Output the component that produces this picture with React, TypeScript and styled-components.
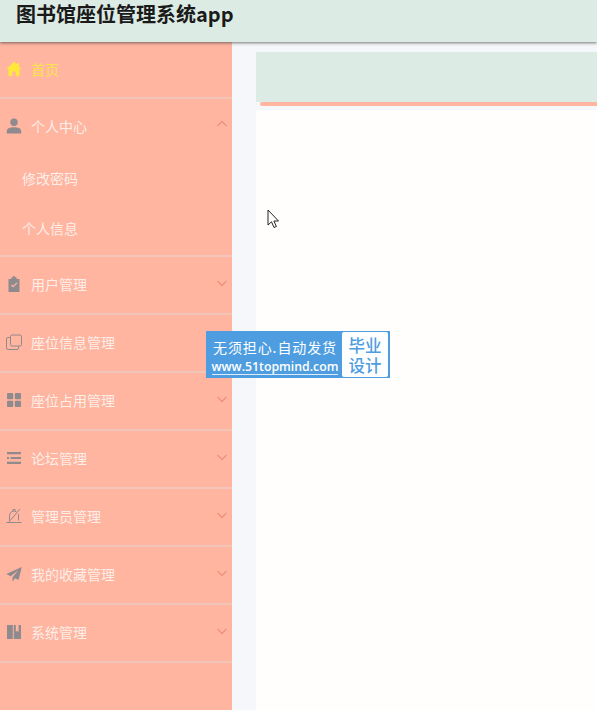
import React from "react";
import styled, { createGlobalStyle } from "styled-components";

const Global = createGlobalStyle`
  html, body { margin: 0; padding: 0; height: 100%; overflow: hidden; background: #f5f7fa; }
  * { box-sizing: border-box; }
  #root { height: 710px; }
`;

const Page = styled.div`
  position: relative;
  width: 597px;
  height: 710px;
  overflow: hidden;
  display: flex;
  flex-direction: column;
  font-family: "Noto Sans CJK SC", "Liberation Sans", sans-serif;
`;

const Header = styled.header`
  position: relative;
  z-index: 2;
  flex: 0 0 42px;
  display: flex;
  align-items: flex-start;
  padding-left: 16px;
  background: #dcebe4;
  box-shadow: 0 1px 3px rgba(60, 60, 60, 0.7);
`;

const Title = styled.h1`
  margin: 0;
  font-size: 20px;
  font-weight: 700;
  line-height: 27px;
  color: #1a1a1a;
`;

const Body = styled.div`
  flex: 1;
  display: flex;
  min-height: 0;
`;

const Sidebar = styled.nav`
  flex: 0 0 232px;
  background: #ffb5a0;
`;

const Row = styled.div<{ $h: number }>`
  height: ${(p) => p.$h}px;
  display: flex;
  align-items: center;
  padding: 0 4px 2px 6px;
`;

const Group = styled.div`
  border-bottom: 2px solid #f0c6ba;
`;

const IconSlot = styled.span<{ $c?: string }>`
  flex: 0 0 16px;
  width: 16px;
  height: 16px;
  margin-right: 9px;
  color: ${(p) => p.$c || "#8f8a8d"};
  display: flex;
  svg { width: 16px; height: 16px; display: block; }
`;

const Label = styled.span<{ $c?: string }>`
  flex: 1;
  font-size: 14px;
  line-height: 20px;
  color: ${(p) => p.$c || "#fdeee8"};
`;

const Chevron = styled.svg`
  width: 12px;
  height: 12px;
  flex: 0 0 12px;
  margin-top: -3px;
  fill: none;
  stroke: #f0907f;
  stroke-width: 1.3;
`;

const SubList = styled.div`
  padding-bottom: 1px;
`;

const SubRow = styled.div`
  height: 50px;
  display: flex;
  align-items: center;
  padding: 0 0 2px 22px;
  font-size: 14px;
  color: #fdeee8;
`;

const Gutter = styled.div`
  flex: 0 0 24px;
  background: #f5f7fa;
`;

const Main = styled.main`
  flex: 1;
  display: flex;
  flex-direction: column;
  padding-top: 10px;
`;

const Banner = styled.div`
  flex: 0 0 50px;
  background: #dcebe4;
`;

const Accent = styled.div`
  flex: 0 0 4px;
  margin-left: 4px;
  background: #ffb5a0;
  border-radius: 2px 0 0 2px;
`;

const Gap = styled.div`
  flex: 0 0 4px;
`;

const Content = styled.div`
  flex: 1;
  background: #fffefc;
`;

const Cursor = styled.svg`
  position: absolute;
  left: 267px;
  top: 209px;
  width: 13px;
  height: 20px;
`;

const Stamp = styled.div`
  position: absolute;
  left: 206px;
  top: 331px;
  width: 184px;
  height: 47px;
  padding: 2px;
  background: #4e9de0;
  display: flex;
`;

const StampLeft = styled.div`
  flex: 1;
  display: flex;
  flex-direction: column;
  align-items: center;
  color: #fff;
`;

const StampTop = styled.div`
  font-size: 14px;
  line-height: 20px;
  margin-top: 4px;
  white-space: nowrap;
  letter-spacing: 0.9px;
`;

const StampUrl = styled.div`
  font-family: "Open Sans", "Liberation Sans", sans-serif;
  font-size: 12.3px;
  line-height: 15px;
  font-weight: 600;
  margin-top: 2px;
  white-space: nowrap;
  border-bottom: 1px solid #dcecf9;
`;

const StampRight = styled.div`
  flex: 0 0 46px;
  background: #fff;
  border-radius: 2px;
  margin: -1px 0;
  display: flex;
  align-items: center;
  justify-content: center;
`;

const StampBadge = styled.div`
  width: 34px;
  color: #4e9de0;
  font-size: 16.5px;
  font-weight: 500;
  line-height: 20px;
  text-align: center;
`;

const S = (props: { children: React.ReactNode }) => (
  <svg viewBox="0 0 16 16" fill="currentColor">{props.children}</svg>
);
const O = (props: { children: React.ReactNode }) => (
  <svg viewBox="0 0 16 16" fill="none" stroke="currentColor" strokeWidth="1">{props.children}</svg>
);

const icons = {
  home: <S><path d="M8 .8.3 8.200h2.200v6.300a.8.8 0 0 0 .8.800h3V10.500h3.400v4.800h3a.8.8 0 0 0 .8-.800V8.200h2.200L13 5.500V2h-2v1.600z" /></S>,
  user: <S><circle cx="8" cy="4.300" r="3.700" /><path d="M.8 15.500v-2.400C.8 10.300 4.500 9.300 8 9.300s7.200 1 7.200 3.800v2.400z" /></S>,
  clip: <S><path fillRule="evenodd" d="M5.300 1.500h1.200a1.500 1.500 0 0 1 3 0h1.200V3h2.800v13H2.500V3h2.800zM4.800 9.300l2.300 2.300 4.300-4.300-.9-.9-3.400 3.400-1.400-1.400z" /></S>,
  copy: <O><rect x="4.500" y="1" width="11" height="11" rx="1.500" /><path d="M4.500 3.500H2A1.500 1.500 0 0 0 .5 5v9A1.500 1.500 0 0 0 2 15.500h9a1.500 1.500 0 0 0 1.500-1.500v-2" /></O>,
  grid: <S><rect x="1" y="1" width="6.200" height="6.200" rx="1" /><rect x="8.800" y="1" width="6.200" height="6.200" rx="1" /><rect x="1" y="8.800" width="6.200" height="6.200" rx="1" /><rect x="8.800" y="8.800" width="6.200" height="6.200" rx="1" /></S>,
  list: <S><path d="M1 2h14v2.200H1zM4.500 6.900H15v2.200H4.500zM1 11.800h14V14H1z" /><path d="M1 6.900h2v2.200H1z" /></S>,
  bell: <O><path d="M3.500 12.500V7.500a4.500 4.500 0 0 1 7-3.700M12.500 6v6.500M.5 14.500h15M2 15 14 1" /><path d="M6.500 2.800a1.500 1.500 0 0 1 3 0" /></O>,
  send: <S><path d="M15.800 1 .3 8l4.400 2.200L12.500 4l-6 7.200V15.500l2.600-3.300 3.400 1.800z" /></S>,
  book: <S><path d="M1 1h5.800v14H1zM7.800 1h2v7l1.400-1.200L12.600 8V1H15v14H7.800z" /></S>,
};

type Item = { label: string; icon: keyof typeof icons };
const items: Item[] = [
  { label: "用户管理", icon: "clip" },
  { label: "座位信息管理", icon: "copy" },
  { label: "座位占用管理", icon: "grid" },
  { label: "论坛管理", icon: "list" },
  { label: "管理员管理", icon: "bell" },
  { label: "我的收藏管理", icon: "send" },
  { label: "系统管理", icon: "book" },
];

export default function App() {
  return (
    <Page>
      <Global />
      <Header>
        <Title>图书馆座位管理系统app</Title>
      </Header>
      <Body>
        <Sidebar>
          <Group>
            <Row $h={55}>
              <IconSlot $c="#ffe83a">{icons.home}</IconSlot>
              <Label $c="#ffe34d">首页</Label>
            </Row>
          </Group>
          <Group>
            <Row $h={55}>
              <IconSlot>{icons.user}</IconSlot>
              <Label>个人中心</Label>
              <Chevron viewBox="0 0 12 12"><path d="M1.500 8 6 3.500 10.500 8" /></Chevron>
            </Row>
            <SubList>
              <SubRow>修改密码</SubRow>
              <SubRow>个人信息</SubRow>
            </SubList>
          </Group>
          {items.map((it) => (
            <Group key={it.label}>
              <Row $h={56}>
                <IconSlot>{icons[it.icon]}</IconSlot>
                <Label>{it.label}</Label>
                <Chevron viewBox="0 0 12 12"><path d="M1.500 4 6 8.500 10.500 4" /></Chevron>
              </Row>
            </Group>
          ))}
        </Sidebar>
        <Gutter />
        <Main>
          <Banner />
          <Accent />
          <Gap />
          <Content />
        </Main>
      </Body>
      <Cursor viewBox="0 0 13 20">
        <path d="M1 1v15l3.500-3.200 2.500 5.700 2.400-1-2.500-5.500H11.500z" fill="#fff" stroke="#222" strokeWidth="1" />
      </Cursor>
      <Stamp>
        <StampLeft>
          <StampTop>无须担心.自动发货</StampTop>
          <StampUrl>www.51topmind.com</StampUrl>
        </StampLeft>
        <StampRight>
          <StampBadge>毕业设计</StampBadge>
        </StampRight>
      </Stamp>
    </Page>
  );
}
